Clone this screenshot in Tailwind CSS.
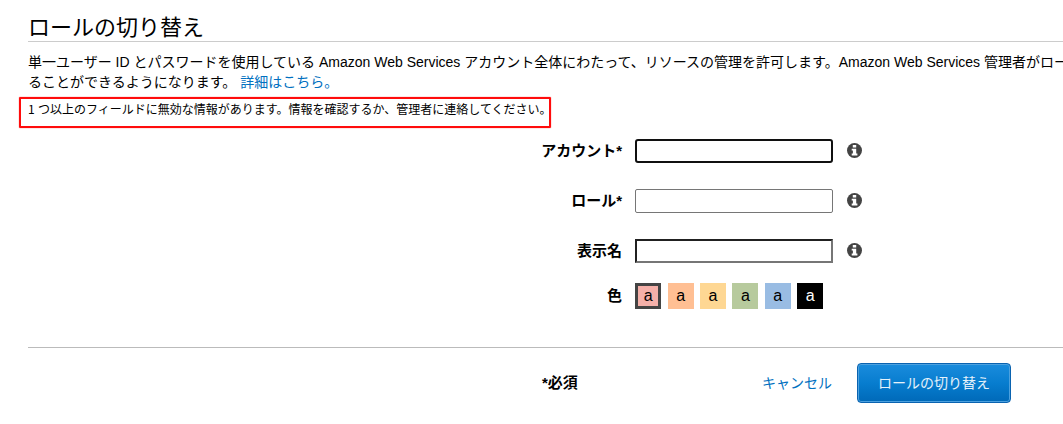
<!DOCTYPE html>
<html lang="ja">
<head>
<meta charset="utf-8">
<title>ロールの切り替え</title>
<script src="https://cdn.jsdelivr.net/npm/@tailwindcss/browser@4"></script>
</head>
<body class="h-[424px] w-[1063px] overflow-hidden bg-white font-['Liberation_Sans','Noto_Sans_CJK_JP',sans-serif] text-black">
<svg class="hidden"><symbol id="info" viewBox="0 0 14 14"><circle cx="7" cy="7" r="7" fill="#444"/><path d="M5.400 1.900h3.200v2.400h-3.200zM4.400 5.300h4.200v4.500h1.100v1.800H4.400V9.800h1.100V7.100H4.400z" fill="#fff"/></symbol></svg>
<header class="ml-7 h-[42px] border-b border-[#ccc] pt-3">
  <h1 class="h-7 text-[22px] leading-8 whitespace-nowrap">ロールの切り替え</h1>
</header>
<div class="ml-7 h-[54px] pt-[10px] text-[14px] leading-5 whitespace-nowrap">
  <p>単一ユーザー ID とパスワードを使用している Amazon Web Services アカウント全体にわたって、リソースの管理を許可します。Amazon Web Services 管理者がロー</p>
  <p>ることができるようになります。 <a class="text-[#0070c0]">詳細はこちら。</a></p>
</div>
<div class="h-8 pt-px pl-[19px]">
  <p class="h-[31px] w-[532px] rounded-[1px] border-2 border-[#ff0c0c] pl-[7px] text-[12px] leading-5 whitespace-nowrap shadow-[0_0_1px_#ff0000]"><span class="font-['Noto_Sans_CJK_JP']">1</span> つ以上のフィールドに無効な情報があります。情報を確認するか、管理者に連絡してください。</p>
</div>
<form class="pt-[11px]">
  <div class="mb-[26px] flex h-6 items-center">
    <label class="w-[622px] text-right text-[15px] leading-6 font-bold">アカウント*</label>
    <input class="ml-[13px] h-6 w-[198px] rounded-[3px] border-2 border-[#101010] outline-none">
    <svg class="mb-px ml-[14px] size-[15px]"><use href="#info"/></svg>
  </div>
  <div class="mb-[26px] flex h-6 items-center">
    <label class="w-[622px] text-right text-[15px] leading-6 font-bold">ロール*</label>
    <input class="ml-[13px] h-6 w-[198px] rounded-[2px] border border-[#767676]">
    <svg class="mb-px ml-[14px] size-[15px]"><use href="#info"/></svg>
  </div>
  <div class="mb-5 flex h-6 items-center">
    <label class="w-[622px] text-right text-[15px] leading-6 font-bold">表示名</label>
    <input class="ml-[13px] h-6 w-[198px] border-2 border-t-[#212121] border-r-[#767676] border-b-[#767676] border-l-[#212121]">
    <svg class="mb-px ml-[14px] size-[15px]"><use href="#info"/></svg>
  </div>
  <div class="flex h-[26px] items-center">
    <span class="w-[622px] text-right text-[15px] leading-6 font-bold">色</span>
    <div class="ml-[13.200px] flex gap-[6.400px] text-center text-[16px] leading-[26px]">
      <span class="size-[26px] border-3 border-[#444] bg-[#f5b0a9] leading-5">a</span>
      <span class="size-[26px] bg-[#ffbf93]">a</span>
      <span class="size-[26px] bg-[#fed793]">a</span>
      <span class="size-[26px] bg-[#b7ca9d]">a</span>
      <span class="size-[26px] bg-[#99bce3]">a</span>
      <span class="size-[26px] bg-black text-white">a</span>
    </div>
  </div>
</form>
<footer class="mt-[38px] ml-7 flex border-t border-[#bbb] pt-[15px]">
  <span class="ml-[514px] w-[220px] text-[15px] leading-10 font-bold">*必須</span>
  <a class="w-[95px] text-[14px] leading-10 text-[#0070c0]">キャンセル</a>
  <button type="button" class="h-10 w-[154px] rounded-[4px] border border-[#0a63b0] bg-linear-to-b from-[#198cdd] via-[#077dcf] to-[#0069b8] text-center text-[14px] leading-[38px] text-white/90 inset-ring inset-ring-[#4ca1df]">ロールの切り替え</button>
</footer>
</body>
</html>
